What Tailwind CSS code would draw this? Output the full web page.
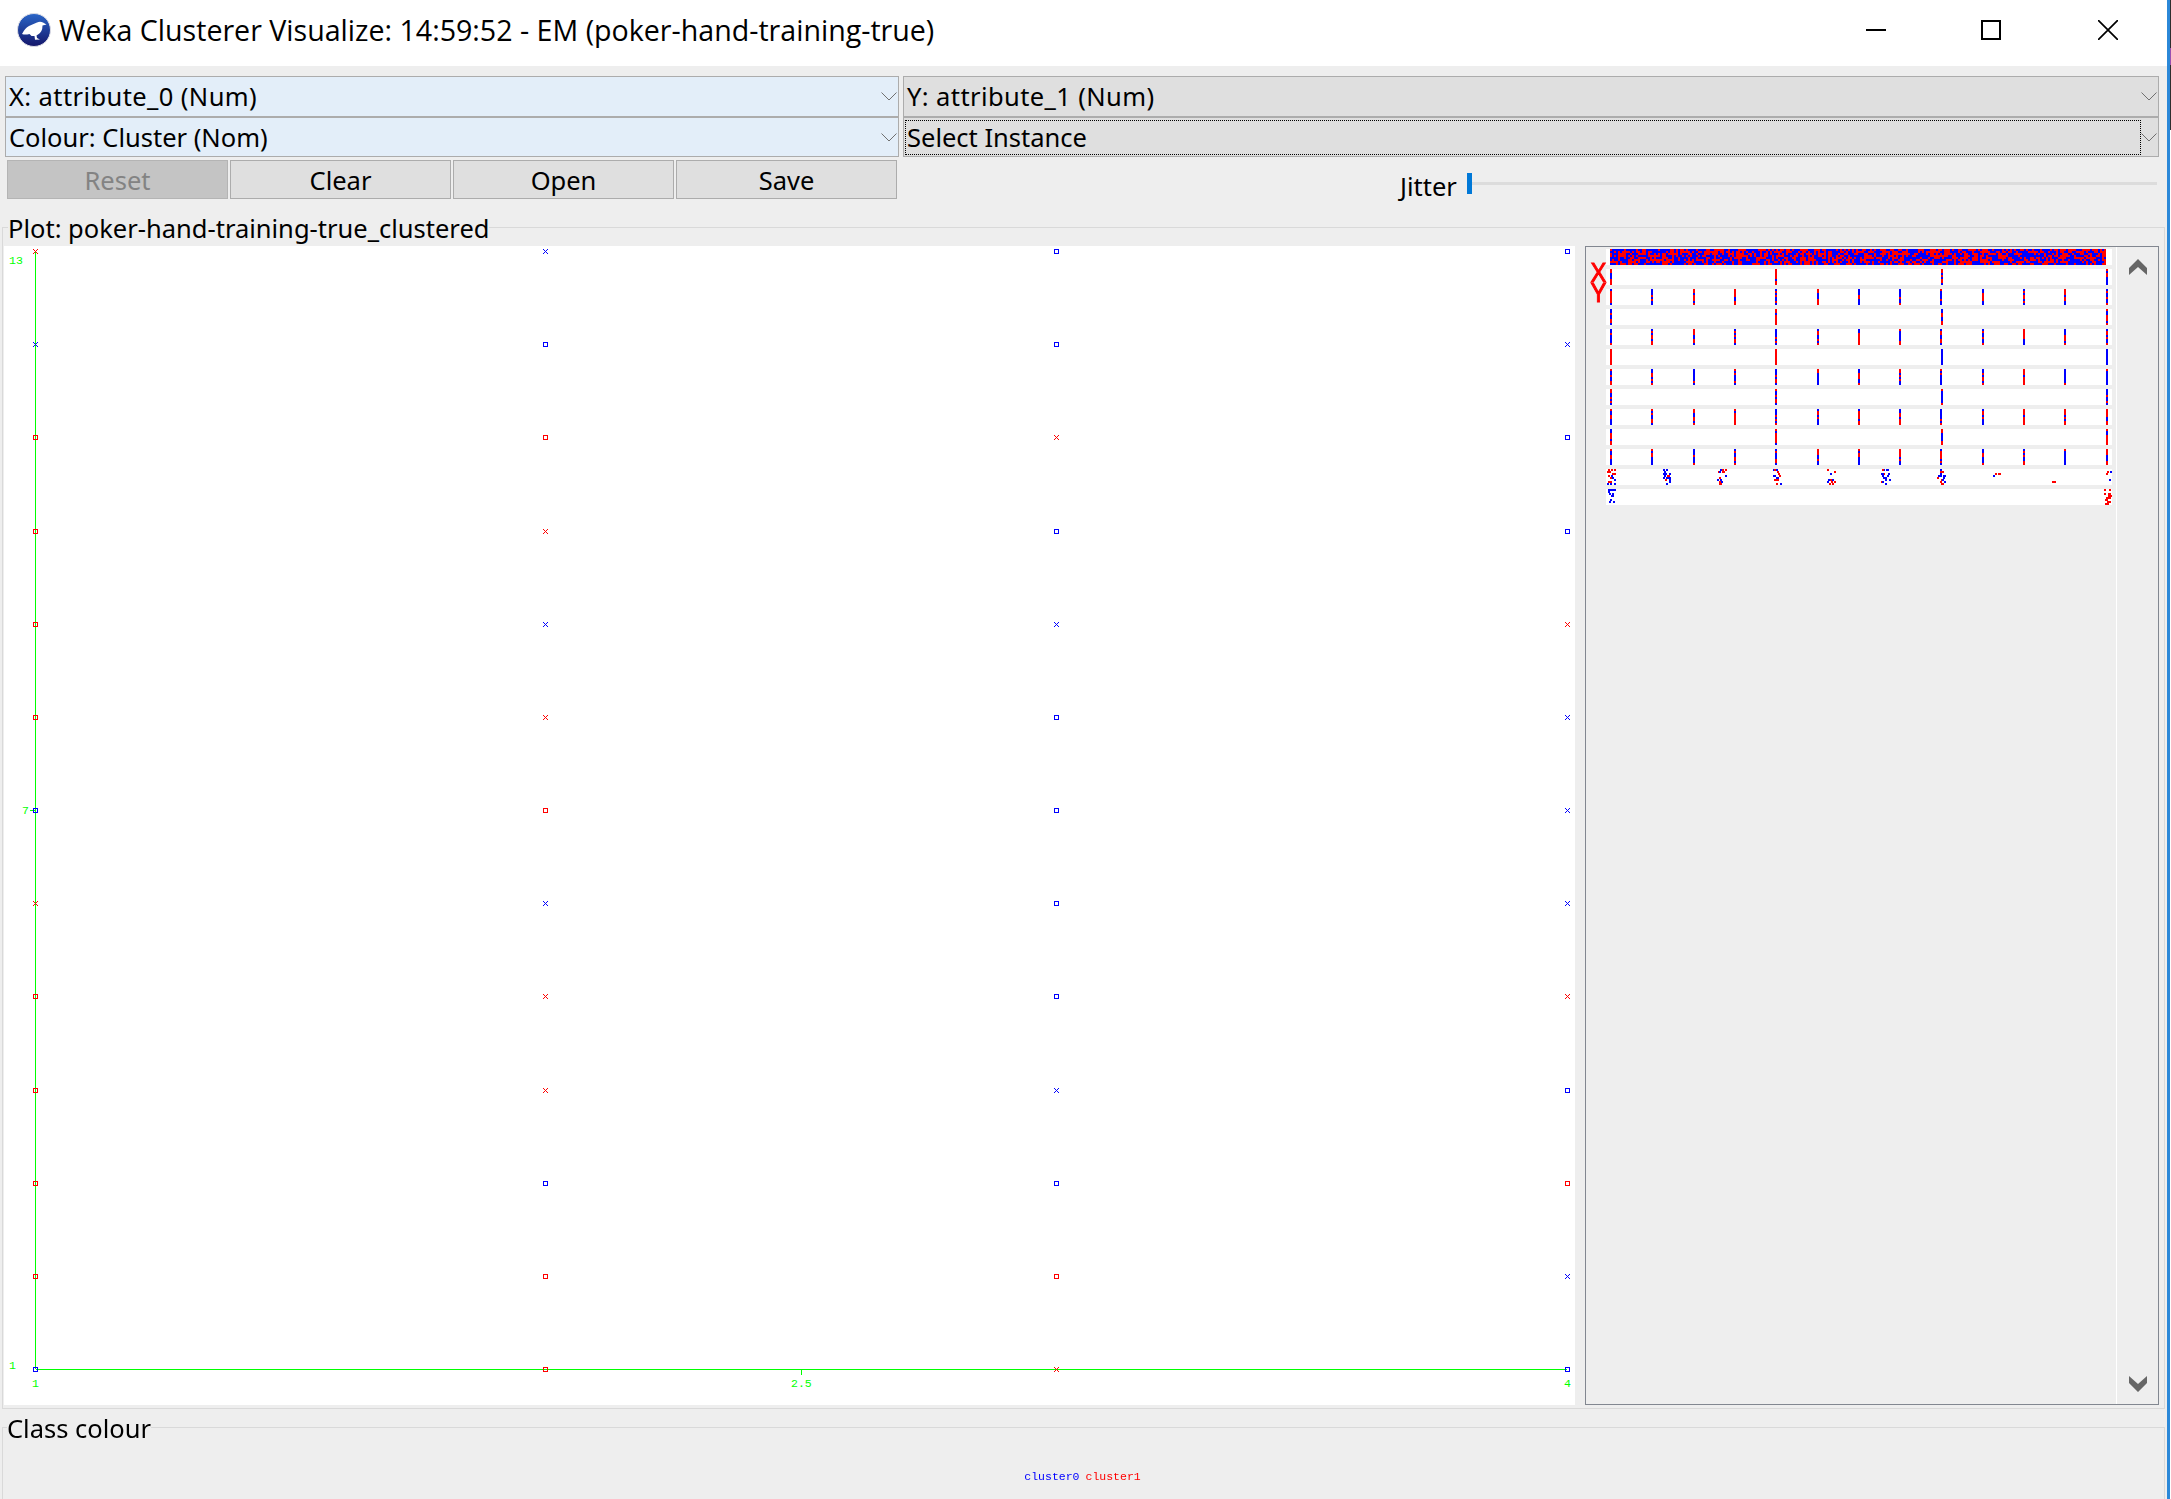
<!DOCTYPE html>
<html lang="en">
<head>
    <meta charset="UTF-8">
    <title>Weka Clusterer Visualize</title>
    <script src="https://cdn.jsdelivr.net/npm/@tailwindcss/browser@4"></script>
</head>
<body class="bg-[#eeeeee]">
<div class="w-[2171px] h-[1499px] flex overflow-hidden font-['Noto_Sans',sans-serif] text-[25.5px] text-black">
    <div class="flex-1 flex flex-col min-w-0">

        <!-- Title bar -->
        <div class="h-[66px] bg-white flex items-center shrink-0">
            <svg class="ml-[17px] mb-[6px] w-[34px] h-[34px]" viewBox="0 0 34 34">
                <defs>
                    <linearGradient id="logo" x1="0" y1="0" x2="0" y2="1">
                        <stop offset="0" stop-color="#2a66c8"/>
                        <stop offset="1" stop-color="#14166a"/>
                    </linearGradient>
                </defs>
                <circle cx="17" cy="17" r="16.5" fill="url(#logo)" stroke="#dcdce4"/>
                <path d="M5 21 Q8 15 12 13 Q17 10.500 20 9.500 Q23 8 26 9.500 L29.500 11.500 L25.500 12.500 Q25.500 19 21 21.500 L19.500 22.500 L20 25 L23 26.500 L18 26.800 L17.500 23 L14.500 23 L12.500 21 Q8 22 5 21 Z" fill="#fff"/>
            </svg>
            <span class="ml-[8px] mb-[5px] text-[28.6px] font-['Open_Sans',sans-serif]">Weka Clusterer Visualize: 14:59:52 - EM (poker-hand-training-true)</span>
            <div class="ml-auto flex items-center mr-[49px] mb-[6px]">
                <div class="w-[20px] h-[2px] bg-black"></div>
                <div class="ml-[95px] w-[20px] h-[20px] border-2 border-black"></div>
                <svg class="ml-[97px] w-[20px] h-[20px]" viewBox="0 0 20 20"><path d="M0 0 L20 20 M20 0 L0 20" stroke="#000" stroke-width="1.700"/></svg>
            </div>
        </div>

        <!-- Axis selectors -->
        <div class="flex gap-[4px] pl-[5px] pr-[8px] pt-[10px] shrink-0">
            <div class="w-[894px] flex flex-col">
                <div class="h-[41px] bg-[#e3eef9] border border-[#acacac] flex items-center justify-between pl-[3px] pr-[1px]">
                    <span class="tracking-[0.4px]">X: attribute_0 (Num)</span>
                    <svg class="w-[16px] h-[9px]" viewBox="0 0 16 9"><path d="M0.500 0.500 L8 8 L15.500 0.500" fill="none" stroke="#707070"/></svg>
                </div>
                <div class="h-[40px] bg-[#e3eef9] border border-[#acacac] flex items-center justify-between pl-[3px] pr-[1px]">
                    <span class="mt-[1px]">Colour: Cluster (Nom)</span>
                    <svg class="w-[16px] h-[9px]" viewBox="0 0 16 9"><path d="M0.500 0.500 L8 8 L15.500 0.500" fill="none" stroke="#707070"/></svg>
                </div>
            </div>
            <div class="w-[1256px] flex flex-col">
                <div class="h-[41px] bg-[#dfdfdf] border border-[#acacac] flex items-center justify-between pl-[3px] pr-[1px]">
                    <span class="tracking-[0.4px]">Y: attribute_1 (Num)</span>
                    <svg class="w-[16px] h-[9px]" viewBox="0 0 16 9"><path d="M0.500 0.500 L8 8 L15.500 0.500" fill="none" stroke="#707070"/></svg>
                </div>
                <div class="h-[40px] bg-[#dfdfdf] border border-[#acacac] flex items-center justify-between pl-[1px] pr-[1px]">
                    <span class="w-[1236px] h-[35px] border border-dotted border-black flex items-center pl-[1px]">Select Instance</span>
                    <svg class="w-[16px] h-[9px]" viewBox="0 0 16 9"><path d="M0.500 0.500 L8 8 L15.500 0.500" fill="none" stroke="#707070"/></svg>
                </div>
            </div>
        </div>

        <!-- Buttons and jitter -->
        <div class="flex pl-[7px] pt-[3px] h-[42px] shrink-0">
            <div class="flex gap-[2px]">
                <button class="w-[221px] h-[39px] bg-[#c4c4c4] border border-[#b4b4b4] text-[#838383]">Reset</button>
                <button class="w-[221px] h-[39px] bg-[#dfdfdf] border border-[#acacac]">Clear</button>
                <button class="w-[221px] h-[39px] bg-[#dfdfdf] border border-[#acacac]">Open</button>
                <button class="w-[221px] h-[39px] bg-[#dfdfdf] border border-[#acacac]">Save</button>
            </div>
            <div class="ml-[503px] flex items-start">
                <span class="w-[59px] mt-[12px] leading-[28px]">Jitter</span>
                <div class="ml-[8px] mt-[13px] w-[5px] h-[21px] bg-[#0078d7]"></div>
                <div class="mt-[22px] w-[685px] h-[3px] bg-[#dcdcdc]"></div>
            </div>
        </div>

        <!-- Plot group -->
        <fieldset class="mx-[2px] mt-[12px] pl-[1px] pr-[5px] pb-[3px] pt-[3px] border border-[#d9d9d9] shrink-0">
            <legend class="ml-[4px] pt-[2px] leading-[30px]">Plot: poker-hand-training-true_clustered</legend>
            <div class="flex gap-[10px] h-[1159px]">
                <svg id="plot" class="w-[1571px] h-[1159px] bg-white shrink-0" viewBox="4 246 1571 1159" shape-rendering="crispEdges"></svg>

                <!-- Attribute panel -->
                <div class="w-[574px] border border-[#828790] flex">
                    <div class="relative w-[20px] shrink-0 font-['Liberation_Sans',sans-serif] text-[#ff0000] text-[28px] leading-[20px] [-webkit-text-stroke:1px_#ff0000]">
                        <span class="absolute left-[3px] top-[16px] scale-x-85">X</span>
                        <span class="absolute left-[3px] top-[36px] scale-x-85">Y</span>
                    </div>
                    <div class="pt-[2px] shrink-0">
                        <canvas id="matrix" width="506" height="256" class="block"></canvas>
                    </div>
                    <div class="ml-[4px] flex-1 border-l border-white flex flex-col items-center justify-between pt-[12px] pb-[12px]">
                        <svg class="w-[18px] h-[16px]" viewBox="0 0 18 16"><path d="M9 0 L18 9 L18 16 L9 8 L0 16 L0 9 Z" fill="#666"/></svg>
                        <svg class="w-[18px] h-[16px]" viewBox="0 0 18 16"><path d="M0 0 L9 8 L18 0 L18 7 L9 16 L0 7 Z" fill="#666"/></svg>
                    </div>
                </div>
            </div>
        </fieldset>

        <!-- Class colour group -->
        <fieldset class="mx-[2px] mt-[2px] flex-1 border border-b-0 border-[#d9d9d9]">
            <legend class="ml-[4px] pt-[2px] leading-[30px]">Class colour</legend>
            <div class="mt-[27px] pr-[2px] flex justify-center gap-[6px] font-['Liberation_Mono',monospace] text-[11.5px] leading-[14px]">
                <span class="text-[#0000ff]">cluster0</span>
                <span class="text-[#ff0000]">cluster1</span>
            </div>
        </fieldset>
    </div>

    <!-- Window edge -->
    <div class="w-[3px] shrink-0 bg-[#2b88d8]"></div>
    <div class="w-[1px] shrink-0 flex flex-col bg-white">
        <div class="h-[48px] bg-[#2d2d2d]"></div>
        <div class="h-[17px] bg-[#9a4fb0]"></div>
        <div class="h-[65px] bg-[#2d2d2d]"></div>
    </div>
</div>

<script>
    // plot points, top row (13) to bottom row (1), per x column
    // R/B = red/blue square, r/b = red/blue cross
    const columns = [
        ["r","b","R","R","R","R","B","r","R","R","R","R","B"],
        ["b","B","R","r","b","r","R","b","r","r","B","R","R"],
        ["B","B","r","B","b","B","B","B","B","b","B","R","r"],
        ["B","b","B","B","r","b","b","b","r","B","R","b","B"]
    ];
    const xs = [35, 545, 1056, 1567];
    const ys = columns[0].map((_, i) => Math.round(251 + i * 93.17));

    let plot = "";
    plot += `<path d="M35.5 251V1369M35.5 1369.500H1567M801.500 1369V1375M30 810.500H35" stroke="#00ff00" fill="none"/>`;
    columns.forEach((col, c) => {
        col.forEach((p, r) => {
            const color = p.toLowerCase() === "r" ? "#ff0000" : "#0000ff";
            const x = xs[c], y = ys[r];
            if (p === "R" || p === "B") {
                plot += `<rect x="${x - 2 + 0.5}" y="${y - 2 + 0.5}" width="4" height="4" fill="none" stroke="${color}"/>`;
            } else {
                plot += `<path d="M${x - 2} ${y - 2}l5 5M${x + 3} ${y - 2}l-5 5" stroke="${color}" fill="none"/>`;
            }
        });
    });
    const label = (x, y, t) => `<text x="${x}" y="${y}" fill="#00ff00" font-family="Liberation Mono" font-size="11.500">${t}</text>`;
    plot += label(9, 264, "13") + label(22, 814, "7") + label(9, 1369, "1");
    plot += label(32, 1387, "1") + label(791, 1387, "2.5") + label(1564, 1387, "4");
    document.getElementById("plot").innerHTML = plot;

    // attribute matrix thumbnails
    let seed = 7;
    function rnd() {
        seed = (seed * 16807) % 2147483647;
        return seed / 2147483647;
    }
    const ctx = document.getElementById("matrix").getContext("2d");
    const RED = "#ff0000", BLUE = "#0000ff";
    const cell = (x, y, c) => { ctx.fillStyle = c; ctx.fillRect(x, y, 2, 2); };
    const randomColor = () => rnd() < 0.5 ? RED : BLUE;

    for (let r = 0; r < 13; r++) {
        const top = r * 20;
        ctx.fillStyle = "#fff";
        ctx.fillRect(0, top, 506, 16);
        if (r === 0) {
            for (let x = 4; x < 500; x += 2) {
                for (let y = 0; y < 16; y += 2) cell(x, y, randomColor());
            }
        } else if (r <= 10) {
            const step = r % 2 ? 165.25 : 41.31;
            for (let x = 4; x < 501; x += step) {
                const px = Math.round(x);
                for (let y = 0; y < 16; y += 2) {
                    let c = randomColor();
                    if (r === 5) c = px < 300 ? RED : BLUE;
                    cell(px, top + y, c);
                }
            }
        } else if (r === 11) {
            const spots = [[5,18,0.5],[60,18,0.7],[115,18,0.4],[170,18,0.6],[225,12,0.3],[279,18,0.8],[335,18,0.7],[389,4,0.5],[446,2,0],[501,4,0.4]];
            spots.forEach(([sx, n, blue]) => {
                for (let i = 0; i < n; i++) {
                    const cx = sx + Math.round((rnd() - 0.5) * 8);
                    cell(cx, top + Math.floor(rnd() * 8) * 2, rnd() < blue ? BLUE : RED);
                }
            });
        } else {
            for (let i = 0; i < 18; i++) cell(5 + Math.round((rnd() - 0.5) * 6), top + Math.floor(rnd() * 8) * 2, BLUE);
            for (let i = 0; i < 18; i++) cell(501 + Math.round((rnd() - 0.5) * 6), top + Math.floor(rnd() * 8) * 2, RED);
        }
    }
</script>
</body>
</html>
